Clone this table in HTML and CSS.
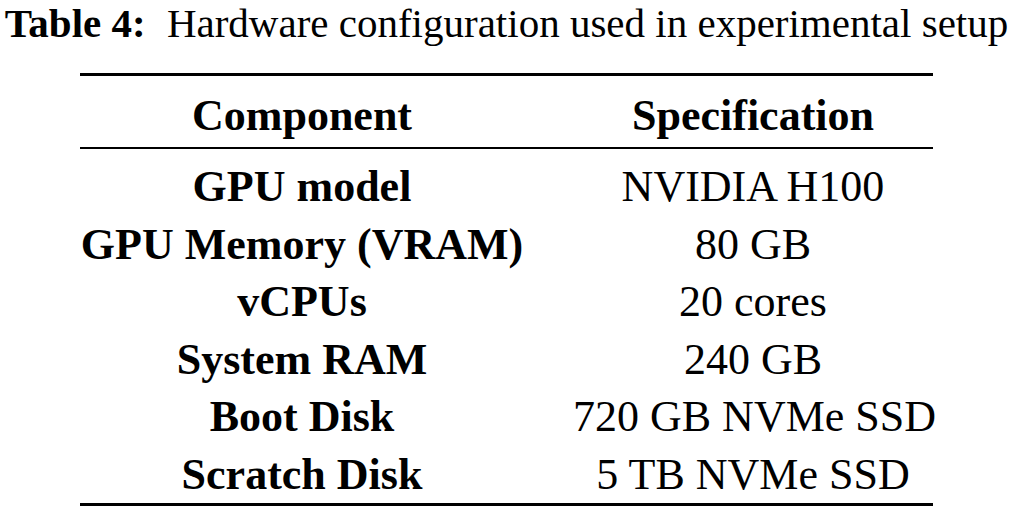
FILE: index.html
```html
<!DOCTYPE html>
<html>
<head>
<meta charset="utf-8">
<link rel="stylesheet" href="styles.css">
</head>
<body>
<div class="page">
  <p class="caption"><span class="label">Table 4:</span> Hardware configuration used in experimental setup</p>
  <div class="spec">
    <div class="row head">
      <div class="cell key">Component</div>
      <div class="cell val">Specification</div>
    </div>
    <div class="body">
      <div class="row"><div class="cell key">GPU model</div><div class="cell val">NVIDIA H100</div></div>
      <div class="row"><div class="cell key">GPU Memory (VRAM)</div><div class="cell val">80 GB</div></div>
      <div class="row"><div class="cell key">vCPUs</div><div class="cell val">20 cores</div></div>
      <div class="row"><div class="cell key">System RAM</div><div class="cell val">240 GB</div></div>
      <div class="row"><div class="cell key">Boot Disk</div><div class="cell val">720 GB NVMe SSD</div></div>
      <div class="row"><div class="cell key">Scratch Disk</div><div class="cell val">5 TB NVMe SSD</div></div>
    </div>
  </div>
</div>
</body>
</html>
```

FILE: styles.css
```css
html, body {
  margin: 0;
  padding: 0;
  background: #ffffff;
}
body {
  font-family: "Liberation Serif", "Times New Roman", serif;
  color: #000;
}
.page {
  width: 1013px;
  display: flex;
  flex-direction: column;
  align-items: center;
}
.caption {
  margin: 0;
  height: 46px;
  font-size: 41px;
  line-height: 46px;
  white-space: nowrap;
}
.caption .label {
  font-weight: bold;
  margin-right: 11px;
}
.spec {
  margin-top: 27px;
  width: 853px;
  border-top: 3px solid #000;
  border-bottom: 3px solid #000;
  font-size: 44px;
  line-height: 57.5px;
}
.row {
  display: grid;
  grid-template-columns: 444px 409px;
}
.head {
  padding-top: 10.5px;
  padding-bottom: 3px;
  border-bottom: 2px solid #000;
  font-weight: bold;
}
.body {
  padding-top: 9px;
}
.cell {
  text-align: center;
  white-space: nowrap;
}
.cell.key {
  font-weight: bold;
}
.cell.val {
  padding-left: 49px;
}
```
